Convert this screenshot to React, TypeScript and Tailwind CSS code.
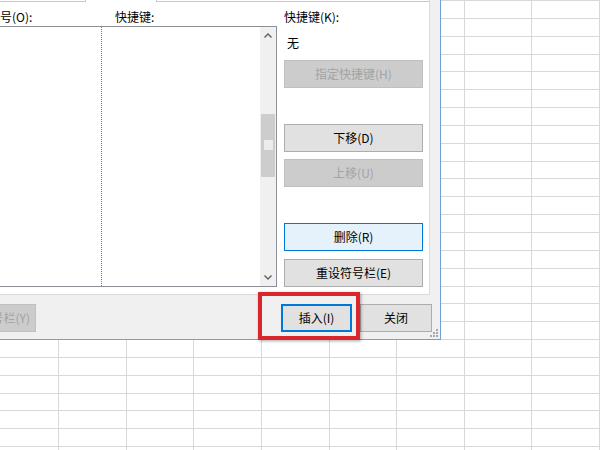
import React from 'react';

const font = { fontFamily: '"Noto Sans CJK SC", "Noto Sans", sans-serif' };

const rows = Array.from({ length: 27 });
const cols = Array.from({ length: 10 });

const Btn: React.FC<{ label: string; kind?: 'normal' | 'disabled' | 'hover' | 'focus'; className?: string }> = ({
  label,
  kind = 'normal',
  className = '',
}) => {
  const look =
    kind === 'disabled'
      ? 'bg-[#cccccc] border border-[#bfbfbf] text-[#a3a3a3]'
      : kind === 'hover'
        ? 'bg-[#e5f1fb] border border-[#0078d7] text-black'
        : kind === 'focus'
          ? 'bg-[#e1e1e1] border-2 border-[#0078d7] text-black'
          : 'bg-[#e1e1e1] border border-[#adadad] text-black';
  return (
    <div className={`h-[28px] flex items-center justify-center text-[12px] leading-[16px] ${look} ${className}`}>
      {label}
    </div>
  );
};

const Chevron: React.FC<{ up?: boolean }> = ({ up }) => (
  <svg width="8" height="5" viewBox="0 0 8 5">
    <polyline
      points={up ? '0.5,4.5 4,1 7.5,4.5' : '0.5,0.5 4,4 7.5,0.5'}
      fill="none"
      stroke="#606060"
      strokeWidth="1.4"
    />
  </svg>
);

export default function App() {
  return (
    <div className="relative w-[600px] h-[450px] overflow-hidden bg-white" style={font}>
      {/* sheet grid behind the dialog */}
      <div className="absolute left-[-8.3px] top-[-16.85px] flex flex-col">
        {rows.map((_, r) => (
          <div key={r} className="flex h-[17.85px]">
            {cols.map((_, c) => (
              <div key={c} className="w-[67.57px] h-full border-r border-b border-[#d9d9d9]" />
            ))}
          </div>
        ))}
      </div>

      {/* dialog */}
      <div className="absolute left-0 top-0 w-[441px] h-[340px] bg-[#f0f0f0] border-r border-b border-[#6fa0d8] flex flex-col">
        <div className="w-[430px] h-[295px] bg-white border-r border-b border-[#dadada] flex flex-col">
          <div className="h-[2px] flex">
            <div className="w-[86px] border-b border-r border-[#c8c8c8]" />
            <div className="ml-[70px] flex-1 border-b border-l border-[#c8c8c8]" />
          </div>
          <div className="flex">
            <div className="w-[277px] flex flex-col">
              <div className="mt-[7px] h-[16px] flex text-[12px] leading-[16px] text-black">
                <span className="w-[115px]">号(O):</span>
                <span>快捷键:</span>
              </div>
              <div className="mt-[1px] ml-[-2px] w-[279px] h-[261px] border border-[#8c8f96] flex">
                <div className="w-[103px] h-full border-r border-dotted border-[#7a7a7a]" />
                <div className="flex-1" />
                <div className="w-[16px] h-full bg-[#f0f0f0] flex flex-col">
                  <div className="h-[17px] flex items-center justify-center">
                    <Chevron up />
                  </div>
                  <div className="mt-[70px] h-[63px] mx-[1px] bg-[#cdcdcd] flex flex-col items-center">
                    <div className="mt-[26px] w-[9px] h-[10px] bg-[#ececec]" />
                  </div>
                  <div className="flex-1" />
                  <div className="h-[17px] flex items-center justify-center">
                    <Chevron />
                  </div>
                </div>
              </div>
            </div>
            <div className="ml-[7px] w-[139px] flex flex-col text-[12px] leading-[16px] text-black">
              <div className="mt-[7px] h-[16px]">快捷键(K):</div>
              <div className="mt-[10px] h-[16px] pl-[3px]">无</div>
              <Btn label="指定快捷键(H)" kind="disabled" className="mt-[9px]" />
              <Btn label="下移(D)" className="mt-[36px]" />
              <Btn label="上移(U)" kind="disabled" className="mt-[7px]" />
              <Btn label="删除(R)" kind="hover" className="mt-[36px]" />
              <Btn label="重设符号栏(E)" className="mt-[8px]" />
            </div>
          </div>
        </div>

        {/* footer buttons */}
        <div className="flex mt-[9px]">
          <div className="ml-[-60px] w-[96px] h-[28px] bg-[#cccccc] border border-[#bfbfbf] text-[#a3a3a3] text-[12px] leading-[16px] flex items-center justify-end pr-[5px]">
            符号栏(Y)
          </div>
          <Btn label="插入(I)" kind="focus" className="ml-[245px] w-[71px]" />
          <Btn label="关闭" className="ml-[8px] w-[72px]" />
        </div>

        {/* resize grip */}
        <svg className="absolute right-[2px] bottom-[2px]" width="8" height="8" viewBox="0 0 8 8">
          <rect x="6" y="0" width="2" height="2" fill="#a8a8a8" />
          <rect x="3" y="3" width="2" height="2" fill="#a8a8a8" />
          <rect x="6" y="3" width="2" height="2" fill="#a8a8a8" />
          <rect x="0" y="6" width="2" height="2" fill="#a8a8a8" />
          <rect x="3" y="6" width="2" height="2" fill="#a8a8a8" />
          <rect x="6" y="6" width="2" height="2" fill="#a8a8a8" />
        </svg>
      </div>

      {/* red highlight */}
      <div className="absolute left-[258px] top-[292px] w-[102px] h-[48px] border-4 border-[#d7262c] shadow-[1px_1px_3px_rgba(0,0,0,0.35)]" />
    </div>
  );
}
